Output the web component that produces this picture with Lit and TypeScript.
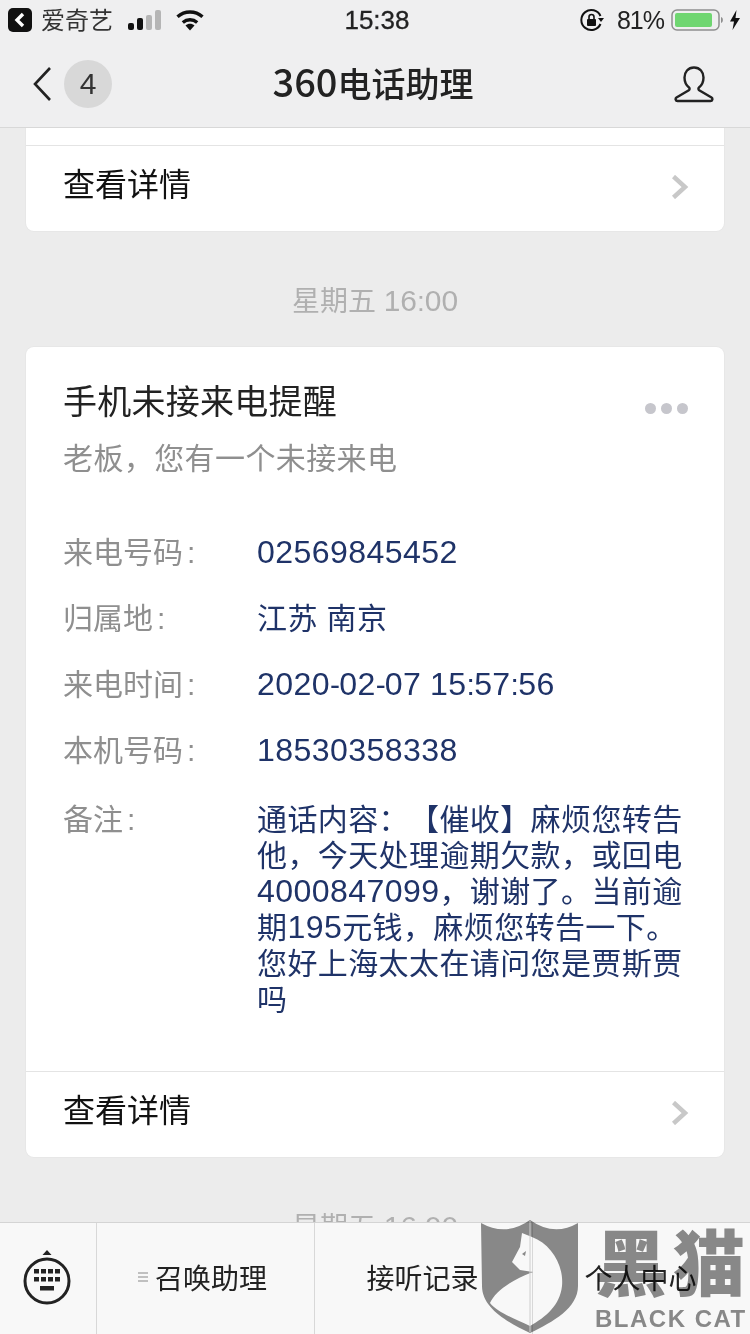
import { LitElement, html, css, svg } from "lit";
import { customElement } from "lit/decorators.js";

const FONT = css`"Liberation Sans", "Noto Sans CJK SC", sans-serif`;

const CHEVRON = html`<svg class="chev" width="18" height="24" viewBox="0 0 18 24"><path d="M2.500 1.500L14 12 2.500 22.500" fill="none" stroke="#c8c8c8" stroke-width="4.500"/></svg>`;

const CALL_ROWS = [
  ["来电号码", "02569845452"],
  ["归属地", "江苏 南京"],
  ["来电时间", "2020-02-07 15:57:56"],
  ["本机号码", "18530358338"],
  ["备注", "通话内容：【催收】麻烦您转告他，今天处理逾期欠款，或回电4000847099，谢谢了。当前逾期195元钱，麻烦您转告一下。您好上海太太在请问您是贾斯贾吗"],
];

// digit runs are set a bit larger, the reference's digits are wider than Liberation's at the same size
const withDigits = (text: string) =>
  text.split(/(\d+|[-:])/).map((part) => {
    if (/^\d+$/.test(part)) return html`<span class="digits">${part}</span>`;
    if (part === "-" || part === ":") return html`<span class="punct">${part}</span>`;
    return part;
  });

@customElement("app-root")
export class AppRoot extends LitElement {
  static styles = css`
    :host {
      display: block;
      position: relative;
      width: 750px;
      height: 1334px;
      overflow: hidden;
      background: #ececec;
      font-family: ${FONT};
      color: #222;
      text-spacing-trim: space-all;
    }
    .page { display: flex; flex-direction: column; height: 1334px; }
    .digits { font-size: 1.07em; line-height: 0; }

    .status {
      height: 40px;
      flex: none;
      display: grid;
      grid-template-columns: 1fr auto 1fr;
      align-items: center;
      background: #efeff0;
      padding: 0 9px 0 8px;
    }
    .status-left, .status-right { display: flex; align-items: center; }
    .status-right { justify-content: flex-end; }
    .back-app { width: 24px; height: 24px; margin-right: 9px; }
    .app-name { font-size: 24px; color: #333; margin: 0 15px 4px 0; }
    .signal { margin-right: 14px; }
    .time { font-size: 26px; color: #222; -webkit-text-stroke: .3px #222; margin-left: 5px; }
    .pct { font-size: 25px; letter-spacing: -1px; margin: 0 7px 0 13px; color: #222; }
    .bolt { margin-left: 4px; }

    .nav {
      height: 88px;
      flex: none;
      position: relative;
      display: flex;
      align-items: center;
      justify-content: center;
      background: #efeff0;
      border-bottom: 1px solid #d8d8d8;
      box-sizing: border-box;
    }
    .nav-title {
      font-family: "Noto Sans CJK SC", sans-serif;
      font-size: 34px;
      font-weight: 500;
      color: #222;
      margin: 0 4px 2px 0;
    }
    .nav-title .digits { font-size: 38px; }
    .nav-left { position: absolute; left: 32px; top: 20px; display: flex; align-items: center; gap: 12px; }
    .badge {
      width: 48px;
      height: 48px;
      border-radius: 50%;
      background: #d8d8d8;
      display: flex;
      align-items: center;
      justify-content: center;
      font-size: 30px;
      color: #333;
    }
    .user { position: absolute; right: 36px; top: 26px; }

    .scroll { flex: 1; min-height: 0; overflow: hidden; padding: 0 26px; }
    .card {
      background: #fff;
      border-radius: 8px;
      box-shadow: 0 0 0 1px #e7e7e7;
    }
    .card.stub { border-radius: 0 0 8px 8px; padding-top: 17px; }
    .more {
      display: flex;
      align-items: center;
      justify-content: space-between;
      height: 85px;
      box-sizing: content-box;
      padding: 0 37px;
      font-size: 32px;
      color: #111;
      border-top: 1px solid #e4e4e4;
    }
    .more-text { margin-bottom: 14px; }
    .chev { margin: 0 -2px 4px 0; }
    .when {
      margin: 56px 0 30px;
      text-align: center;
      font-size: 28px;
      line-height: 30px;
      color: #b0b0b0;
    }
    .body { padding: 31px 37px 53px; }
    .head { position: relative; }
    .title { font-size: 34px; letter-spacing: .25px; line-height: 48px; color: #222; }
    .sub { font-size: 30px; letter-spacing: .4px; line-height: 44px; color: #8f8f8f; margin-top: 11px; }
    .dots { position: absolute; right: -1px; top: 25px; display: flex; gap: 5px; }
    .dots i { width: 11px; height: 11px; border-radius: 50%; background: #c6c6cc; }
    .rows { margin-top: 54px; display: flex; flex-direction: column; gap: 30px; }
    .row { display: grid; grid-template-columns: 194px 1fr; line-height: 36px; font-size: 30px; }
    .row:last-child { margin-top: 3px; }
    .label { color: #8f8f8f; }
    .colon { margin-left: 4px; }
    .value { color: #1f3368; letter-spacing: .4px; }
    .value .punct { letter-spacing: -.8px; }

    .tabs {
      height: 112px;
      flex: none;
      display: grid;
      grid-template-columns: 96px 218px 218px 218px;
      background: #f8f8f8;
      border-top: 1px solid #d4d4d4;
      box-sizing: border-box;
    }
    .tab {
      display: flex;
      align-items: center;
      justify-content: center;
      font-size: 28px;
      color: #222;
      border-left: 1px solid #d8d8d8;
      gap: 7px;
      padding: 0 2px 4px 0;
    }
    .tab:first-child { border-left: 0; }
    .tab.call { padding-right: 6px; }
    .menu { width: 10px; height: 10px; }

    .mark {
      position: absolute;
      left: 481px;
      top: 1220px;
      width: 269px;
      height: 114px;
      mix-blend-mode: multiply;
    }
    .shield { position: absolute; left: 0; top: 0; }
    .mark-cn {
      position: absolute;
      left: 114px;
      top: -3px;
      font-family: "Noto Sans CJK SC", sans-serif;
      font-weight: 900;
      font-size: 72px;
      line-height: 84px;
      letter-spacing: 6px;
      color: #8c8c8c;
      white-space: nowrap;
    }
    .mark-en {
      position: absolute;
      left: 114px;
      top: 86px;
      font-family: "Liberation Sans", sans-serif;
      font-weight: 700;
      font-size: 24px;
      line-height: 26px;
      letter-spacing: 1.5px;
      color: #8c8c8c;
      white-space: nowrap;
    }
  `;

  renderStatus() {
    return html`<div class="status">
      <div class="status-left">
        <svg class="back-app" viewBox="0 0 24 24"><rect width="24" height="24" rx="5" fill="#111"/><path d="M15 6l-6 6 6 6" fill="none" stroke="#fff" stroke-width="3.400"/></svg>
        <span class="app-name">爱奇艺</span>
        <svg class="signal" width="33" height="20" viewBox="0 0 33 20">
          <rect x="0" y="13" width="6" height="7" rx="2" fill="#111"/>
          <rect x="9" y="8" width="6" height="12" rx="2" fill="#111"/>
          <rect x="18" y="5" width="6" height="15" rx="2" fill="#b5b5b5"/>
          <rect x="27" y="0" width="6" height="20" rx="2" fill="#b5b5b5"/>
        </svg>
        <svg width="30" height="22" viewBox="0 0 30 22">
          <path d="M15 21.500l-4.500-5c2.600-2.200 6.400-2.200 9 0z" fill="#111"/>
          <path d="M7.800 13.500c4.200-3.600 10.200-3.600 14.400 0" fill="none" stroke="#111" stroke-width="3.400"/>
          <path d="M2.500 7.800c7.200-6.400 17.800-6.400 25 0" fill="none" stroke="#111" stroke-width="3.400"/>
        </svg>
      </div>
      <div class="time">15:38</div>
      <div class="status-right">
        <svg width="24" height="24" viewBox="0 0 24 24">
          <path d="M20.500 8A10 10 0 1 0 20.500 16" fill="none" stroke="#111" stroke-width="2"/>
          <path d="M18 10h6l-3 4z" fill="#111"/>
          <rect x="7" y="11" width="9" height="7" rx="1" fill="#111"/>
          <path d="M9 11V9a2.500 2.500 0 0 1 5 0v2" fill="none" stroke="#111" stroke-width="1.600"/>
        </svg>
        <span class="pct">81%</span>
        <svg width="54" height="22" viewBox="0 0 54 22">
          <rect x="1" y="1" width="47" height="20" rx="5" fill="none" stroke="#8e8e8e" stroke-width="1.500"/>
          <rect x="4" y="4" width="37" height="14" rx="2" fill="#6fd671"/>
          <path d="M50 8c2.500 .5 2.500 5.500 0 6z" fill="#8e8e8e"/>
        </svg>
        <svg class="bolt" width="12" height="22" viewBox="0 0 12 22"><path d="M7.500 1L1 12.500h4L3.500 21 11 9H6.500z" fill="#111"/></svg>
      </div>
    </div>`;
  }

  renderNav() {
    return html`<div class="nav">
      <div class="nav-left">
        <svg width="20" height="36" viewBox="0 0 20 36"><path d="M18 2L3 18l15 16" fill="none" stroke="#222" stroke-width="2.600"/></svg>
        <div class="badge">4</div>
      </div>
      <div class="nav-title">${withDigits("360电话助理")}</div>
      <svg class="user" width="40" height="37" viewBox="0 0 40 37">
        <path d="M20 1.500c-6 0-9.500 4.500-9.500 10 0 4.500 2 8 4.500 10 .8.7.8 2-.2 2.700L2.500 31.500C1 32.500 1.500 35 3.500 35h33c2 0 2.500-2.500 1-3.500L25.200 24.200c-1-.7-1-2-.2-2.700 2.500-2 4.500-5.500 4.500-10C29.500 6 26 1.500 20 1.500z" fill="none" stroke="#222" stroke-width="2.400"/>
      </svg>
    </div>`;
  }

  renderMore() {
    return html`<div class="more"><span class="more-text">查看详情</span>${CHEVRON}</div>`;
  }

  renderMissedCall() {
    return html`<div class="card">
      <div class="body">
        <div class="head">
          <div class="title">手机未接来电提醒</div>
          <div class="sub">老板，您有一个未接来电</div>
          <div class="dots"><i></i><i></i><i></i></div>
        </div>
        <div class="rows">
          ${CALL_ROWS.map(([label, value]) => html`<div class="row">
            <div class="label">${label}<span class="colon">:</span></div>
            <div class="value">${withDigits(value)}</div>
          </div>`)}
        </div>
      </div>
      ${this.renderMore()}
    </div>`;
  }

  renderTabs() {
    return html`<div class="tabs">
      <div class="tab">
        <svg width="48" height="56" viewBox="0 0 48 56">
          <path d="M24 1l4.500 5h-9z" fill="#222"/>
          <circle cx="24" cy="32" r="22" fill="none" stroke="#222" stroke-width="3"/>
          ${[0, 1, 2, 3].map((i) => svg`
            <rect x=${11 + i * 7} y="20" width="5" height="4.500" fill="#222"/>
            <rect x=${11 + i * 7} y="28" width="5" height="4.500" fill="#222"/>`)}
          <rect x="17" y="37" width="14" height="4.500" fill="#222"/>
        </svg>
      </div>
      <div class="tab call">
        <svg class="menu" viewBox="0 0 10 10"><path d="M0 1h10M0 5h10M0 9h10" stroke="#888" stroke-width="1"/></svg>
        召唤助理
      </div>
      <div class="tab">接听记录</div>
      <div class="tab">个人中心</div>
    </div>`;
  }

  render() {
    return html`<div class="page">
        ${this.renderStatus()}
        ${this.renderNav()}
        <div class="scroll">
          <div class="card stub">${this.renderMore()}</div>
          <div class="when">${withDigits("星期五 16:00")}</div>
          ${this.renderMissedCall()}
          <div class="when">${withDigits("星期五 16:00")}</div>
        </div>
        ${this.renderTabs()}
      </div>
      <div class="mark">
        <svg class="shield" width="100" height="114" viewBox="0 0 100 114">
          <path fill="#8c8c8c" d="M0 3Q25 17 49 0 73 17 97 3V66C97 88 72 102 49 113 26 102 1 88 1 66z"/>
          <path fill="#fff" d="M41 13L51 17C70 24 83 45 81 66 79 85 65 97 49 106 32 98 16 92 9 83 14 72 30 60 52 52L39 50 31 42 39 27z"/>
          <path d="M49 1V112" stroke="#d4d4d4" stroke-width="1"/>
          <path d="M41 34l4-3-1 5z" fill="#8c8c8c"/>
        </svg>
        <div class="mark-cn">黑猫</div>
        <div class="mark-en">BLACK CAT</div>
      </div>`;
  }
}
